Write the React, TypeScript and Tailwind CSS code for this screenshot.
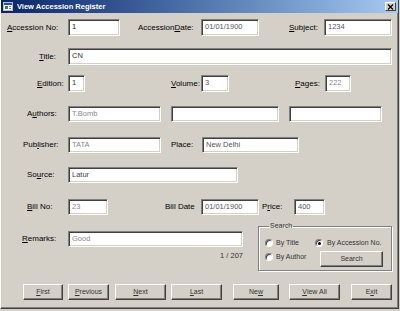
import React from 'react';

// label text: '&' marks the access key letter
const Key = ({ text }: { text: string }) => {
  const i = text.indexOf('&');
  if (i < 0) return <>{text}</>;
  return (
    <>
      {text.slice(0, i)}
      <span className="underline underline-offset-1">{text[i + 1]}</span>
      {text.slice(i + 2)}
    </>
  );
};

const Label = ({ cls, text }: { cls: string; text: string }) => (
  <div className={`${cls} shrink-0 text-[8px] leading-[10px] text-black whitespace-nowrap`}>
    <Key text={text} />
  </div>
);

const Field = ({ cls, value = '', tone = 'text-[#444]' }: { cls: string; value?: string; tone?: string }) => (
  <div
    className={`${cls} shrink-0 h-full bg-white border border-t-[#808080] border-l-[#808080] border-b-white border-r-white shadow-[inset_1px_1px_0_#404040,inset_-1px_-1px_0_#d4d0c8] pl-[3px] pt-[2px] text-[7.5px] leading-[10px] whitespace-nowrap overflow-hidden ${tone}`}
  >
    {value}
  </div>
);

const Btn = ({ cls, text }: { cls: string; text: string }) => (
  <button
    type="button"
    className={`${cls} shrink-0 flex items-center justify-center text-[7px] leading-[10px] text-[#333] bg-[#d4d0c8] border border-t-white border-l-white border-b-[#404040] border-r-[#404040] shadow-[inset_-1px_-1px_0_#808080]`}
  >
    <Key text={text} />
  </button>
);

const Radio = ({ on = false }: { on?: boolean }) => (
  <div className="w-[8px] h-[8px] shrink-0 rounded-full bg-white border border-t-[#808080] border-l-[#808080] border-b-white border-r-white shadow-[inset_1px_1px_0_#404040] flex items-center justify-center">
    {on && <div className="w-[3px] h-[3px] rounded-full bg-black" />}
  </div>
);

const App = () => {
  return (
    <div className="w-[400px] h-[311px] bg-[#d4d0c8] font-['Liberation_Sans',Arial,sans-serif] overflow-hidden">
      <div className="w-[399px] h-[309px] flex flex-col bg-[#d4d0c8] border-l border-l-white border-r border-r-[#404040] border-b border-b-[#404040] shadow-[inset_-1px_-1px_0_#808080]">
        {/* title bar */}
        <div className="h-[13px] flex items-center bg-gradient-to-r from-[#0a246a] to-[#a6caf0]">
          <svg width="10" height="9" viewBox="0 0 10 9" className="ml-[2px] shrink-0">
            <rect x="0.5" y="0.5" width="9" height="8" fill="#ffffff" stroke="#c0c0c0" />
            <rect x="1" y="1" width="8" height="2" fill="#1f4fa0" />
            <rect x="2" y="4" width="3" height="3" fill="#3a6ea5" />
            <rect x="6" y="4" width="2" height="1" fill="#808080" />
            <rect x="6" y="6" width="2" height="1" fill="#808080" />
          </svg>
          <span className="ml-[4px] text-[7.5px] leading-[10px] font-bold text-white whitespace-nowrap">
            View Accession Register
          </span>
          <div className="ml-auto mr-[2px] w-[11px] h-[9px] flex items-center justify-center bg-[#d4d0c8] border border-t-white border-l-white border-b-[#404040] border-r-[#404040]">
            <svg width="7" height="6" viewBox="0 0 7 6">
              <path d="M1 0.5 L6 5.5 M6 0.5 L1 5.5" stroke="#000" strokeWidth="1.2" />
            </svg>
          </div>
        </div>

        {/* accession no / date / subject */}
        <div className="flex items-center h-[17px] mt-[6px]">
          <Label cls="ml-[6px] w-[61px]" text="&Accession No:" />
          <Field cls="w-[52px]" value="1" tone="text-[#222]" />
          <Label cls="ml-[18px] w-[63px]" text="Accession&Date:" />
          <Field cls="w-[58px]" value="01/01/1900" tone="text-[#555]" />
          <Label cls="ml-[30px] w-[35px]" text="&Subject:" />
          <Field cls="w-[68px]" value="1234" tone="text-[#555]" />
        </div>

        {/* title */}
        <div className="flex items-center h-[17px] mt-[12px]">
          <Label cls="ml-[38px] w-[29px]" text="&Title:" />
          <Field cls="w-[324px]" value="CN" tone="text-[#333]" />
        </div>

        {/* edition / volume / pages */}
        <div className="flex items-center h-[17px] mt-[10px]">
          <Label cls="ml-[36px] w-[31px]" text="&Edition:" />
          <Field cls="w-[17px]" value="1" tone="text-[#333]" />
          <Label cls="ml-[86px] w-[30px]" text="&Volume:" />
          <Field cls="w-[28px]" value="3" tone="text-[#555]" />
          <Label cls="ml-[66px] w-[30px]" text="&Pages:" />
          <Field cls="w-[26px]" value="222" tone="text-[#888]" />
        </div>

        {/* authors */}
        <div className="flex items-center h-[16px] mt-[14px]">
          <Label cls="ml-[26px] w-[41px]" text="A&uthors:" />
          <Field cls="w-[93px]" value="T.Bomb" tone="text-[#888]" />
          <Field cls="ml-[10px] w-[108px]" />
          <Field cls="ml-[10px] w-[93px]" />
        </div>

        {/* publisher / place */}
        <div className="flex items-center h-[16px] mt-[15px]">
          <Label cls="ml-[22px] w-[45px]" text="Pub&lisher:" />
          <Field cls="w-[93px]" value="TATA" tone="text-[#888]" />
          <Label cls="ml-[10px] w-[31px]" text="Place:" />
          <Field cls="w-[97px]" value="New Delhi" tone="text-[#555]" />
        </div>

        {/* source */}
        <div className="flex items-center h-[16px] mt-[14px]">
          <Label cls="ml-[26px] w-[41px]" text="So&urce:" />
          <Field cls="w-[170px]" value="Latur" tone="text-[#444]" />
        </div>

        {/* bill no / bill date / price */}
        <div className="flex items-center h-[16px] mt-[16px]">
          <Label cls="ml-[26px] w-[41px]" text="&Bill No:" />
          <Field cls="w-[40px]" value="23" tone="text-[#888]" />
          <Label cls="ml-[57px] w-[36px]" text="Bill Date" />
          <Field cls="w-[58px]" value="01/01/1900" tone="text-[#555]" />
          <Label cls="ml-[3px] w-[32px]" text="P&rice:" />
          <Field cls="w-[31px]" value="400" tone="text-[#555]" />
        </div>

        {/* remarks + search group */}
        <div className="flex items-start mt-[7px] h-[49px]">
          <div className="flex flex-col mt-[9px]">
            <div className="flex items-center h-[16px]">
              <Label cls="ml-[21px] w-[46px]" text="&Remarks:" />
              <Field cls="w-[175px]" value="Good" tone="text-[#888]" />
            </div>
            <div className="mt-[4px] self-end text-[7.5px] leading-[10px] text-[#333]">1 / 207</div>
          </div>
          <fieldset className="ml-[15px] w-[134px] h-[49px] border border-[#808080] shadow-[1px_1px_0_#ffffff,inset_1px_1px_0_#ffffff] pl-[6px]">
            <legend className="ml-[4px] px-[1px] text-[7px] leading-[8px] text-[#333]">Search</legend>
            <div className="flex items-center h-[8px] mt-[9px]">
              <div className="flex items-center w-[50px]">
                <Radio />
                <span className="ml-[3px] text-[7px] leading-[10px] text-[#333] whitespace-nowrap">By Title</span>
              </div>
              <Radio on />
              <span className="ml-[4px] text-[7px] leading-[10px] text-[#333] whitespace-nowrap">By Accession No.</span>
            </div>
            <div className="flex items-center h-[16px] mt-[4px]">
              <div className="flex items-center w-[55px] -mt-[4px]">
                <Radio />
                <span className="ml-[3px] text-[7px] leading-[10px] text-[#333] whitespace-nowrap">By Author</span>
              </div>
              <Btn cls="w-[63px] h-[16px]" text="Search" />
            </div>
          </fieldset>
        </div>

        {/* navigation buttons */}
        <div className="flex items-center h-[16px] mt-[13px]">
          <Btn cls="ml-[22px] w-[40px] h-[16px]" text="&First" />
          <Btn cls="ml-[5px] w-[41px] h-[16px]" text="&Previous" />
          <Btn cls="ml-[6px] w-[51px] h-[16px]" text="&Next" />
          <Btn cls="ml-[5px] w-[51px] h-[16px]" text="&Last" />
          <Btn cls="ml-[11px] w-[46px] h-[16px]" text="Ne&w" />
          <Btn cls="ml-[10px] w-[51px] h-[16px]" text="&View All" />
          <Btn cls="ml-[11px] w-[41px] h-[16px]" text="E&xit" />
        </div>
      </div>
    </div>
  );
};

export default App;
